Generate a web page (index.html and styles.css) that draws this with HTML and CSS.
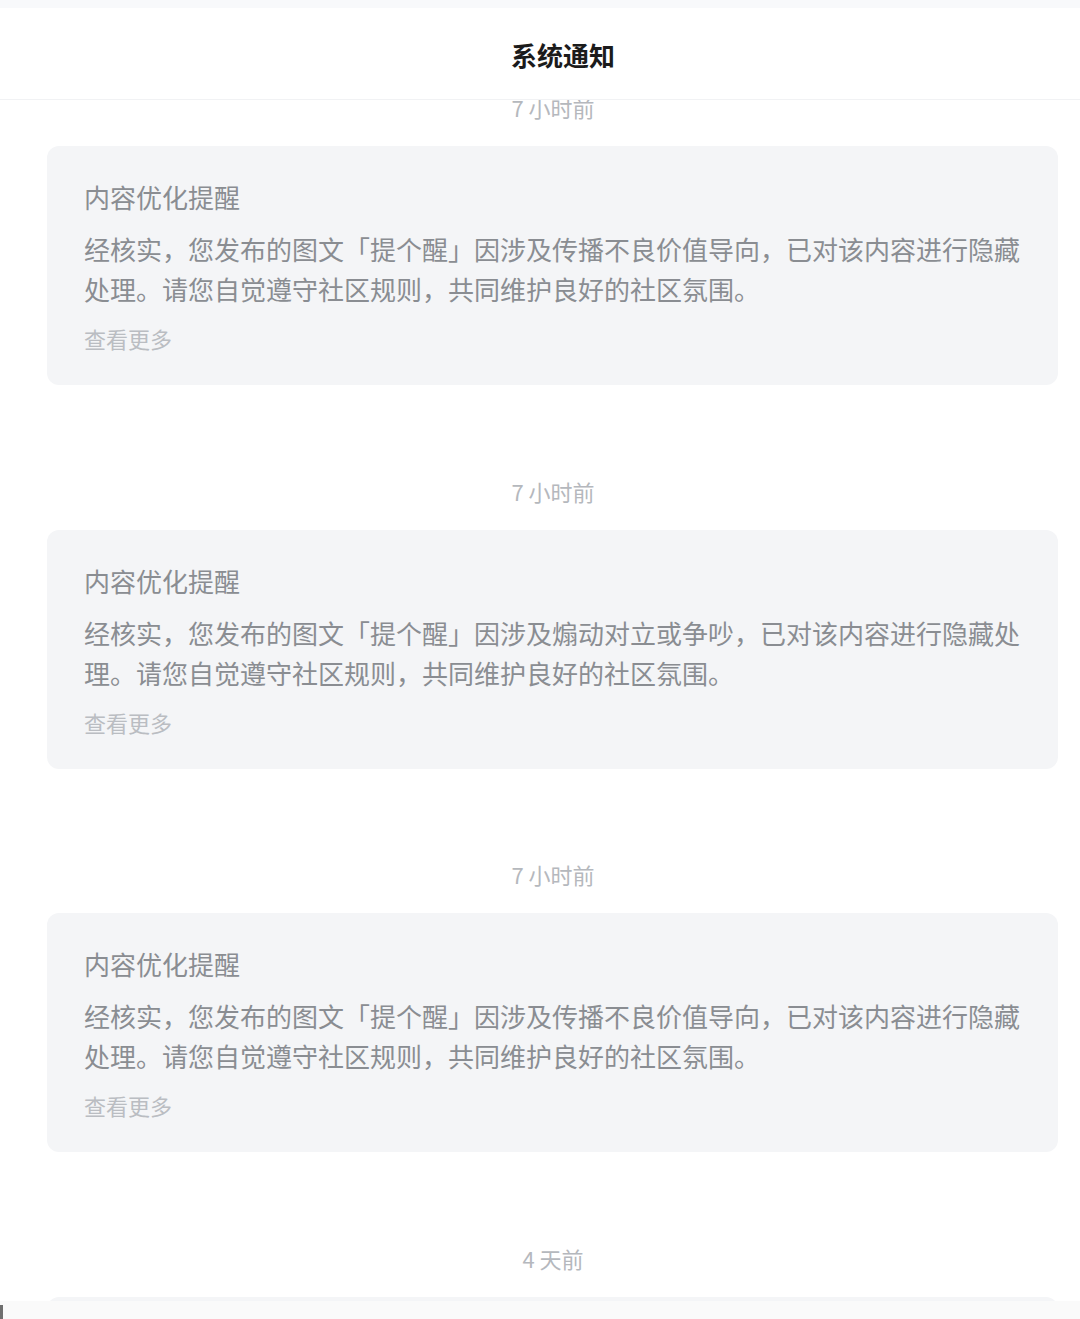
FILE: index.html
```html
<!DOCTYPE html>
<html lang="zh-CN">
<head>
<meta charset="utf-8">
<title>系统通知</title>
<link rel="stylesheet" href="styles.css">
</head>
<body>
<div class="page">
  <div class="status-strip"></div>
  <header class="nav">
    <h1 class="nav-title">系统通知</h1>
  </header>
  <main class="list">
    <section class="item first">
      <div class="time">7 小时前</div>
      <div class="card">
        <div class="card-title">内容优化提醒</div>
        <p class="card-body">经核实，您发布的图文「提个醒」因涉及传播不良价值导向，已对该内容进行隐藏处理。请您自觉遵守社区规则，共同维护良好的社区氛围。</p>
        <div class="card-more">查看更多</div>
      </div>
    </section>
    <section class="item">
      <div class="time">7 小时前</div>
      <div class="card">
        <div class="card-title">内容优化提醒</div>
        <p class="card-body">经核实，您发布的图文「提个醒」因涉及煽动对立或争吵，已对该内容进行隐藏处理。请您自觉遵守社区规则，共同维护良好的社区氛围。</p>
        <div class="card-more">查看更多</div>
      </div>
    </section>
    <section class="item">
      <div class="time">7 小时前</div>
      <div class="card">
        <div class="card-title">内容优化提醒</div>
        <p class="card-body">经核实，您发布的图文「提个醒」因涉及传播不良价值导向，已对该内容进行隐藏处理。请您自觉遵守社区规则，共同维护良好的社区氛围。</p>
        <div class="card-more">查看更多</div>
      </div>
    </section>
    <section class="item">
      <div class="time">4 天前</div>
      <div class="card">
        <div class="card-title">内容优化提醒</div>
        <p class="card-body">经核实，您发布的图文「提个醒」因涉及传播不良价值导向，已对该内容进行隐藏处理。请您自觉遵守社区规则，共同维护良好的社区氛围。</p>
        <div class="card-more">查看更多</div>
      </div>
    </section>
  </main>
  <div class="bottom-bar"><span class="bottom-mark"></span></div>
</div>
</body>
</html>
```

FILE: styles.css
```css
* {
  box-sizing: border-box;
}

html, body {
  margin: 0;
  padding: 0;
  background: #ffffff;
}

body {
  font-family: "Noto Sans CJK SC", "Noto Sans", "Liberation Sans", sans-serif;
  width: 1080px;
  height: 1319px;
  overflow: hidden;
}

.page {
  position: relative;
  width: 1080px;
  height: 1319px;
  overflow: hidden;
  display: flex;
  flex-direction: column;
}

.status-strip {
  height: 8px;
  background: #f8f9fb;
  flex: none;
}

.nav {
  height: 92px;
  flex: none;
  display: flex;
  align-items: center;
  justify-content: center;
  padding-left: 46px;
  padding-top: 2px;
  border-bottom: 1px solid #f1f2f4;
  background: #ffffff;
  position: relative;
  z-index: 2;
}

.nav-title {
  margin: 0;
  font-size: 26px;
  font-weight: 700;
  color: #1b1b1b;
  line-height: 36px;
}

.list {
  flex: 1;
  overflow: hidden;
  display: flex;
  flex-direction: column;
  padding: 0 22px 0 47px;
}

.item {
  display: flex;
  flex-direction: column;
  flex: none;
  margin-bottom: 90.5px;
}

.item.first {
  margin-top: -8px;
}

.time {
  height: 30px;
  line-height: 30px;
  font-size: 22px;
  color: #b5b8bd;
  text-align: center;
  padding-left: 1px;
  margin-bottom: 24px;
}

.card {
  background: #f4f5f7;
  border-radius: 12px;
  padding: 31px 37px 0 37px;
  height: 239px;
}

.card-title {
  font-size: 26px;
  line-height: 40px;
  color: #8a8d92;
  margin-bottom: 12px;
}

.card-body {
  margin: 0 0 14px 0;
  font-size: 26px;
  line-height: 40px;
  color: #8a8d92;
}

.card-more {
  font-size: 22px;
  line-height: 30px;
  color: #babdc2;
}

.bottom-bar {
  position: absolute;
  left: 0;
  right: 0;
  bottom: 0;
  height: 18px;
  background: #fafafa;
  z-index: 3;
}

.bottom-mark {
  position: absolute;
  left: 0;
  top: 4px;
  width: 3px;
  height: 14px;
  background: #6f6f6f;
}
```
